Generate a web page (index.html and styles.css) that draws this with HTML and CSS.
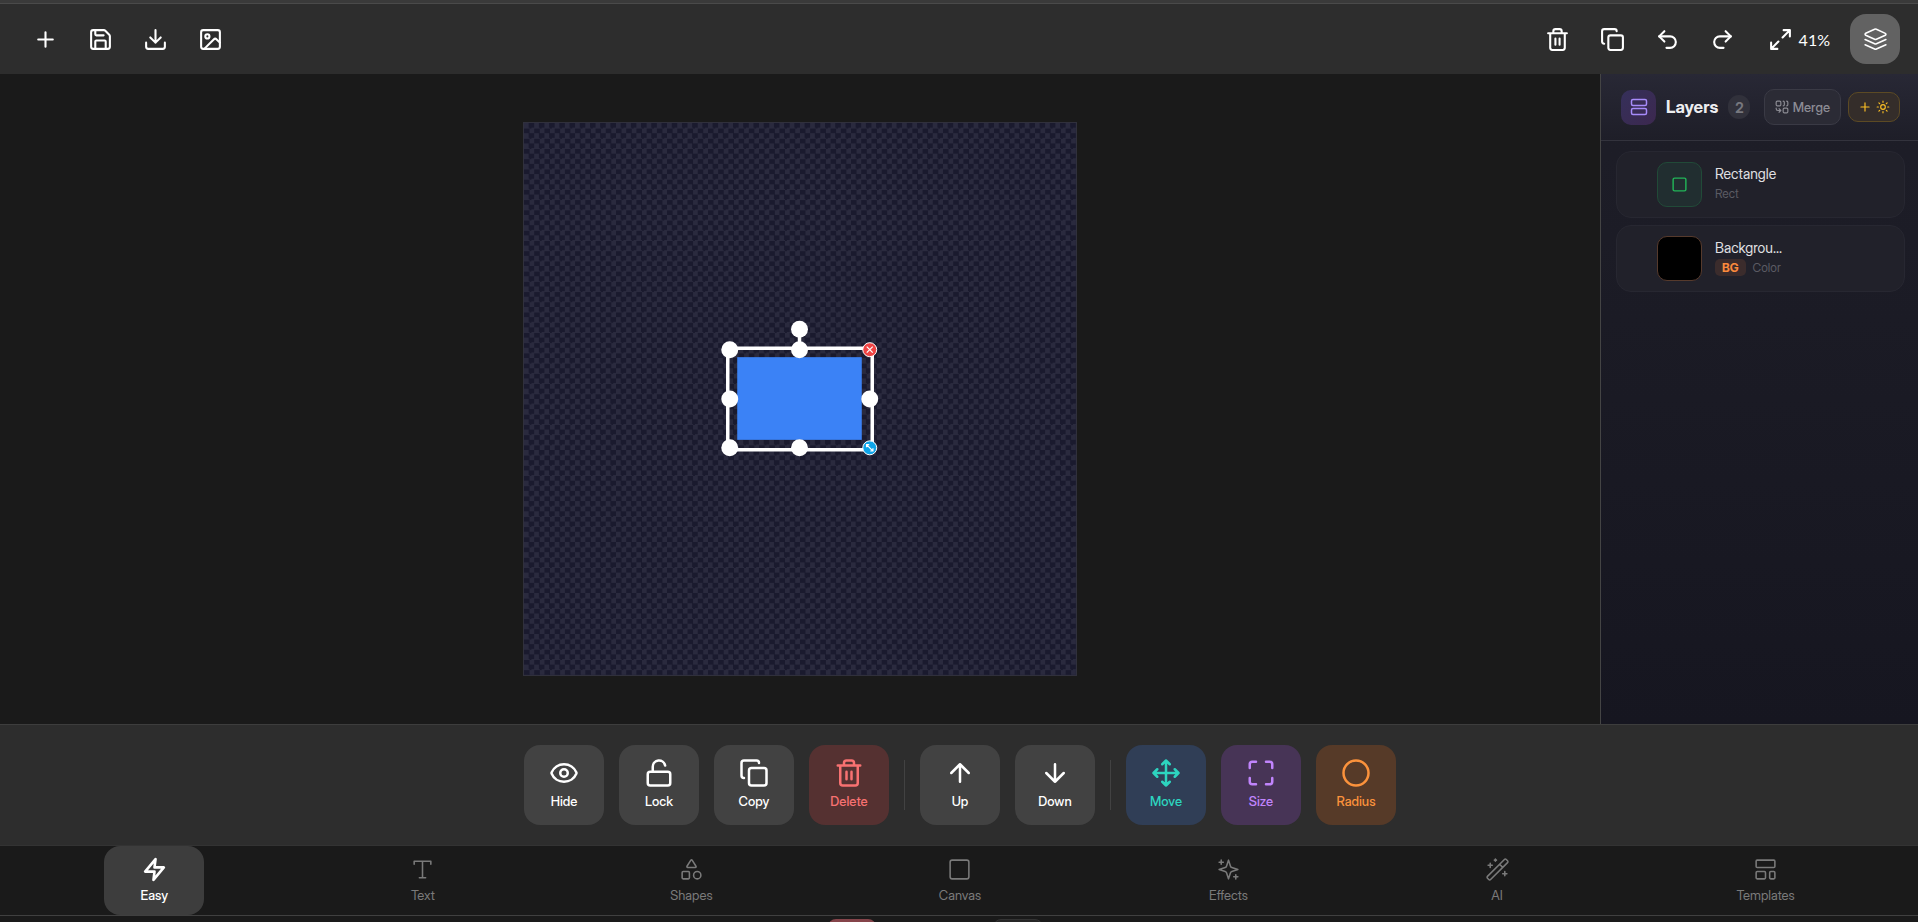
FILE: index.html
```html
<!DOCTYPE html>
<html lang="en">
<head>
<meta charset="utf-8">
<meta name="viewport" content="width=device-width, initial-scale=1">
<title>Image Editor</title>
<link rel="stylesheet" href="styles.css">
</head>
<body>
<div class="window-edge"></div>
<header class="topbar">
  <div class="tool-group">
    <button class="tool" aria-label="New"><svg class="icon" viewBox="0 0 24 24"><path d="M5 12h14M12 5v14"/></svg></button>
    <button class="tool" aria-label="Save"><svg class="icon" viewBox="0 0 24 24"><path d="M15.2 3a2 2 0 0 1 1.4.6l3.8 3.8a2 2 0 0 1 .6 1.4V19a2 2 0 0 1-2 2H5a2 2 0 0 1-2-2V5a2 2 0 0 1 2-2z"/><path d="M17 21v-7a1 1 0 0 0-1-1H8a1 1 0 0 0-1 1v7M7 3v4a1 1 0 0 0 1 1h7"/></svg></button>
    <button class="tool" aria-label="Download"><svg class="icon" viewBox="0 0 24 24"><path d="M21 15v4a2 2 0 0 1-2 2H5a2 2 0 0 1-2-2v-4M7 10l5 5 5-5M12 15V3"/></svg></button>
    <button class="tool" aria-label="Image"><svg class="icon" viewBox="0 0 24 24"><rect x="3" y="3" width="18" height="18" rx="2"/><circle cx="9" cy="9" r="2"/><path d="m21 15-3.086-3.086a2 2 0 0 0-2.828 0L6 21"/></svg></button>
  </div>
  <div class="tool-group">
    <button class="tool" aria-label="Delete"><svg class="icon" viewBox="0 0 24 24"><path d="M3 6h18M19 6v14a2 2 0 0 1-2 2H7a2 2 0 0 1-2-2V6M8 6V4a2 2 0 0 1 2-2h4a2 2 0 0 1 2 2v2M10 11v6M14 11v6"/></svg></button>
    <button class="tool" aria-label="Duplicate"><svg class="icon" viewBox="0 0 24 24"><rect x="8" y="8" width="14" height="14" rx="2"/><path d="M4 16c-1.1 0-2-.9-2-2V4c0-1.1.9-2 2-2h10c1.1 0 2 .9 2 2"/></svg></button>
    <button class="tool" aria-label="Undo"><svg class="icon" viewBox="0 0 24 24"><path d="M9 14 4 9l5-5"/><path d="M4 9h10.5a5.5 5.5 0 0 1 0 11H11"/></svg></button>
    <button class="tool" aria-label="Redo"><svg class="icon" viewBox="0 0 24 24"><path d="m15 14 5-5-5-5"/><path d="M20 9H9.500a5.500 5.500 0 0 0 0 11H13"/></svg></button>
    <button class="tool zoom"><svg class="icon" viewBox="0 0 24 24"><path d="M15 3h6v6M9 21H3v-6M21 3l-7 7M3 21l7-7"/></svg><span>41%</span></button>
    <button class="tool is-on" aria-label="Layers"><svg class="icon thin" viewBox="0 0 24 24"><path d="M12.830 2.180a2 2 0 0 0-1.660 0L2.600 6.080a1 1 0 0 0 0 1.830l8.580 3.910a2 2 0 0 0 1.660 0l8.580-3.900a1 1 0 0 0 0-1.830z"/><path d="m22 12-9.170 4.160a2 2 0 0 1-1.660 0L2 12M22 17l-9.170 4.160a2 2 0 0 1-1.660 0L2 17"/></svg></button>
  </div>
</header>

<main class="workspace">
  <section class="stage" aria-label="Canvas">
    <div class="artboard">
      <svg class="drawing" viewBox="0 0 554 554">
        <rect class="shape" x="214" y="235" width="125" height="83"/>
        <path class="frame" d="M204.500 226h145v102h-145zM276.500 207v19"/>
        <g class="handles">
          <circle cx="276.500" cy="207" r="8.500"/>
          <circle cx="206.500" cy="227.500" r="8.500"/><circle cx="276.500" cy="227.500" r="8.500"/>
          <circle cx="206.500" cy="277" r="8.500"/><circle cx="347" cy="277" r="8.500"/>
          <circle cx="206.500" cy="326" r="8.500"/><circle cx="276.500" cy="326" r="8.500"/>
        </g>
        <circle class="remove" cx="347" cy="227.500" r="7"/>
        <path class="mark" d="m344 224.500 6 6m0-6-6 6"/>
        <circle class="resize" cx="347" cy="326" r="7"/>
        <path class="mark" d="m344 323 6 6M343.800 325.500v-2.700h2.700M350.200 326.500v2.700h-2.700"/>
      </svg>
    </div>
  </section>

  <aside class="layers">
    <div class="layers-head">
      <span class="layers-logo"><svg class="icon small" viewBox="0 0 24 24"><rect x="2" y="2" width="20" height="8" rx="2"/><rect x="2" y="14" width="20" height="8" rx="2"/></svg></span>
      <h2>Layers</h2>
      <span class="count">2</span>
      <div class="head-actions">
        <button class="merge"><svg class="icon tiny" viewBox="0 0 24 24"><path d="M10 18H5a3 3 0 0 1-3-3v-1M14 2a2 2 0 0 1 2 2v4a2 2 0 0 1-2 2M20 2a2 2 0 0 1 2 2v4a2 2 0 0 1-2 2M7 21l3-3-3-3"/><rect x="14" y="14" width="8" height="8" rx="2"/><rect x="2" y="2" width="8" height="8" rx="2"/></svg>Merge</button>
        <button class="add-light" aria-label="Add light"><svg class="icon tiny" viewBox="0 0 24 24"><path d="M5 12h14M12 5v14"/></svg><svg class="icon tiny" viewBox="0 0 24 24"><circle cx="12" cy="12" r="4"/><path d="M12 2v2M12 20v2M4.930 4.930l1.410 1.410M17.660 17.660l1.410 1.410M2 12h2M20 12h2M6.340 17.660l-1.410 1.410M19.070 4.930l-1.410 1.410"/></svg></button>
      </div>
    </div>
    <ul class="layer-list">
      <li class="layer">
        <span class="thumb thumb-rect"><svg class="icon mini" viewBox="0 0 24 24"><rect x="3" y="3" width="18" height="18" rx="2"/></svg></span>
        <div class="layer-text">
          <div class="layer-name">Rectangle</div>
          <div class="layer-meta"><span>Rect</span></div>
        </div>
      </li>
      <li class="layer">
        <span class="thumb thumb-bg"></span>
        <div class="layer-text">
          <div class="layer-name">Backgrou...</div>
          <div class="layer-meta"><span class="tag">BG</span><span>Color</span></div>
        </div>
      </li>
    </ul>
  </aside>
</main>

<div class="actions" role="toolbar" aria-label="Object actions">
  <button class="action"><svg class="icon big" viewBox="0 0 24 24"><path d="M2.062 12.348a1 1 0 0 1 0-.696 10.750 10.750 0 0 1 19.876 0 1 1 0 0 1 0 .696 10.750 10.750 0 0 1-19.876 0"/><circle cx="12" cy="12" r="3"/></svg>Hide</button>
  <button class="action"><svg class="icon big" viewBox="0 0 24 24"><rect x="3" y="11" width="18" height="11" rx="2"/><path d="M7 11V7a5 5 0 0 1 9.900-1"/></svg>Lock</button>
  <button class="action"><svg class="icon big" viewBox="0 0 24 24"><rect x="8" y="8" width="14" height="14" rx="2"/><path d="M4 16c-1.100 0-2-.9-2-2V4c0-1.100.9-2 2-2h10c1.100 0 2 .9 2 2"/></svg>Copy</button>
  <button class="action red"><svg class="icon big" viewBox="0 0 24 24"><path d="M3 6h18M19 6v14a2 2 0 0 1-2 2H7a2 2 0 0 1-2-2V6M8 6V4a2 2 0 0 1 2-2h4a2 2 0 0 1 2 2v2M10 11v6M14 11v6"/></svg>Delete</button>
  <span class="divider"></span>
  <button class="action"><svg class="icon big" viewBox="0 0 24 24"><path d="m5 12 7-7 7 7M12 19V5"/></svg>Up</button>
  <button class="action"><svg class="icon big" viewBox="0 0 24 24"><path d="M12 5v14M19 12l-7 7-7-7"/></svg>Down</button>
  <span class="divider"></span>
  <button class="action teal"><svg class="icon big" viewBox="0 0 24 24"><path d="M12 2v20M15 19l-3 3-3-3M19 9l3 3-3 3M2 12h20M5 9l-3 3 3 3M9 5l3-3 3 3"/></svg>Move</button>
  <button class="action purple"><svg class="icon big" viewBox="0 0 24 24"><path d="M8 3H5a2 2 0 0 0-2 2v3M21 8V5a2 2 0 0 0-2-2h-3M3 16v3a2 2 0 0 0 2 2h3M16 21h3a2 2 0 0 0 2-2v-3"/></svg>Size</button>
  <button class="action orange"><svg class="icon big" viewBox="0 0 24 24"><circle cx="12" cy="12" r="10"/></svg>Radius</button>
</div>

<nav class="tabs">
  <button class="tab is-active"><svg class="icon" viewBox="0 0 24 24"><path d="M13 2 3 14h9l-1 8 10-12h-9z"/></svg>Easy</button>
  <button class="tab"><svg class="icon" viewBox="0 0 24 24"><path d="M4 7V4h16v3M9 20h6M12 4v16"/></svg>Text</button>
  <button class="tab"><svg class="icon" viewBox="0 0 24 24"><path d="M8.300 10a.7.7 0 0 1-.626-1.079L11.400 3a.7.7 0 0 1 1.198-.043L16.300 8.900a.7.7 0 0 1-.572 1.100z"/><rect x="3" y="14" width="7" height="7" rx="1"/><circle cx="17.500" cy="17.500" r="3.500"/></svg>Shapes</button>
  <button class="tab"><svg class="icon" viewBox="0 0 24 24"><rect x="3" y="3" width="18" height="18" rx="2"/></svg>Canvas</button>
  <button class="tab"><svg class="icon" viewBox="0 0 24 24"><path d="m12 3-1.912 5.813a2 2 0 0 1-1.275 1.275L3 12l5.813 1.912a2 2 0 0 1 1.275 1.275L12 21l1.912-5.813a2 2 0 0 1 1.275-1.275L21 12l-5.813-1.912a2 2 0 0 1-1.275-1.275zM5 3v4M19 17v4M3 5h4M17 19h4"/></svg>Effects</button>
  <button class="tab"><svg class="icon" viewBox="0 0 24 24"><path d="m21.640 3.640-1.280-1.280a1.210 1.210 0 0 0-1.720 0L2.360 18.640a1.210 1.210 0 0 0 0 1.720l1.280 1.280a1.200 1.200 0 0 0 1.720 0L21.640 5.360a1.200 1.200 0 0 0 0-1.720M14 7l3 3M5 6v4M19 14v4M10 2v2M7 8H3M21 16h-4M11 3H9"/></svg>AI</button>
  <button class="tab"><svg class="icon" viewBox="0 0 24 24"><rect x="3" y="3" width="18" height="7" rx="1"/><rect x="3" y="14" width="9" height="7" rx="1"/><rect x="16" y="14" width="5" height="7" rx="1"/></svg>Templates</button>
</nav>

<footer class="tray"><span class="tray-red"></span><span class="tray-grey"></span></footer>
</body>
</html>
```
FILE: styles.css
```css
* { box-sizing: border-box; }

body {
  margin: 0;
  height: 100vh;
  overflow: hidden;
  display: flex;
  flex-direction: column;
  background: #1a1a1a;
  color: #fff;
  font-family: "Inter Display", Inter, "Liberation Sans", sans-serif;
  font-variation-settings: "opsz" 32;
}

button {
  margin: 0;
  padding: 0;
  border: 0;
  background: none;
  color: inherit;
  font: inherit;
  font-variation-settings: inherit;
  cursor: pointer;
}

.icon {
  display: block;
  flex: none;
  width: 25px;
  height: 25px;
  fill: none;
  stroke: currentColor;
  stroke-width: 2;
  stroke-linecap: round;
  stroke-linejoin: round;
}
.icon.thin { stroke-width: 1.5; }
.icon.big { width: 30px; height: 30px; }
.icon.small { width: 18px; height: 18px; }
.icon.mini { width: 17px; height: 17px; }
.icon.tiny { width: 14px; height: 14px; }

/* Top bar */
.window-edge {
  flex: none;
  height: 4px;
  background: #3a3a3a;
  border-bottom: 1px solid #4a4a4a;
}
.topbar {
  flex: none;
  height: 70px;
  padding: 0 18px 0 20px;
  display: flex;
  align-items: center;
  justify-content: space-between;
  background: #2d2d2d;
}
.tool-group { display: flex; gap: 5px; }
.tool {
  width: 50px;
  height: 50px;
  border-radius: 16px;
  display: flex;
  align-items: center;
  justify-content: center;
}
.tool.zoom {
  width: auto;
  padding: 0 15px;
  gap: 6px;
  font: 16px Lato, "Noto Sans", sans-serif;
}
.tool.is-on { background: #626262; }

/* Work area */
.workspace {
  flex: 1;
  min-height: 0;
  display: flex;
}
.stage {
  flex: 1;
  padding: 48px;
  display: flex;
  justify-content: center;
}
.artboard {
  height: 100%;
  aspect-ratio: 1;
  border: 1px solid #30303c;
  background: repeating-conic-gradient(#1a1a2e 0 25%, #2a2a3e 0 50%) 0 0 / calc(100% / 54) calc(100% / 54);
}
.drawing { display: block; width: 100%; height: 100%; }
.shape { fill: #3b82f6; }
.frame { fill: none; stroke: #fff; stroke-width: 3.5; }
.handles { fill: #fff; }
.remove { fill: #ef4444; stroke: #fff; stroke-width: 1; }
.resize { fill: #0ea5e9; stroke: #fff; stroke-width: 1; }
.mark { fill: none; stroke: #fff; stroke-width: 1.2; }

/* Layers panel */
.layers {
  flex: none;
  width: 318px;
  border-left: 1px solid #444;
  background: linear-gradient(#1e1e28, #161620);
}
.layers-head {
  height: 67px;
  padding: 0 18px 0 20px;
  display: flex;
  align-items: center;
  gap: 10px;
  border-bottom: 1px solid #33333d;
  background: linear-gradient(#282835, #1e1e28);
}
.layers-logo {
  width: 35px;
  height: 35px;
  border-radius: 10px;
  display: grid;
  place-items: center;
  background: linear-gradient(135deg, #35305a, #3c284f);
  color: #a78bfa;
}
.layers h2 {
  margin: 0;
  font-size: 17px;
  font-weight: 700;
  color: #ededf0;
}
.count {
  min-width: 22px;
  height: 24px;
  border-radius: 12px;
  display: grid;
  place-items: center;
  background: #31313b;
  color: #77777e;
  font-size: 14px;
  font-weight: 700;
}
.head-actions {
  margin-left: auto;
  display: flex;
  align-items: center;
  gap: 7px;
}
.merge, .add-light {
  display: flex;
  align-items: center;
  justify-content: center;
  border: 1px solid #3a3a45;
  border-radius: 10px;
}
.merge {
  height: 36px;
  padding: 0 10px;
  gap: 4px;
  background: #2b2b35;
  color: #8c8c94;
  font-size: 13px;
  font-weight: 500;
}
.add-light {
  width: 52px;
  height: 30px;
  gap: 4px;
  border-color: #5c4a24;
  background: #342d2a;
  color: #fbbf24;
}
.layer-list {
  margin: 0;
  padding: 10px 13px 10px 15px;
  display: grid;
  gap: 7px;
  list-style: none;
}
.layer {
  min-height: 67px;
  padding: 10px 10px 10px 40px;
  display: flex;
  align-items: center;
  gap: 13px;
  border: 1px solid #272731;
  border-radius: 15px;
  background: #21212a;
}
.thumb {
  flex: none;
  width: 45px;
  height: 45px;
  border: 1px solid;
  border-radius: 10px;
  display: grid;
  place-items: center;
}
.thumb-rect { border-color: #214a38; background: #212e30; color: #22b558; }
.thumb-bg { border-color: #563a2c; background: #000; }
.layer-text { padding-bottom: 2px; }
.layer-name {
  white-space: nowrap;
  font-size: 14px;
  line-height: 20px;
  color: #e0e0e3;
}
.layer-meta {
  display: flex;
  align-items: center;
  gap: 7px;
  min-height: 20px;
  font-size: 12px;
  line-height: 17px;
  color: #5b5b63;
}
.tag {
  padding: 0 7px;
  border-radius: 5px;
  background: #3b2c2c;
  color: #fb8a3c;
  font-size: 12px;
  font-weight: 700;
}

/* Object actions */
.actions {
  flex: none;
  height: 121px;
  padding-left: 2px;
  display: flex;
  align-items: center;
  justify-content: center;
  gap: 15px;
  border-top: 1px solid #3d3d3d;
  background: #2d2d2d;
}
.action {
  width: 80px;
  height: 80px;
  padding-bottom: 3px;
  border-radius: 16px;
  display: flex;
  flex-direction: column;
  align-items: center;
  justify-content: center;
  gap: 5px;
  background: #424242;
  font-size: 13px;
  line-height: 16px;
  font-weight: 500;
}
.action.red { background: #553131; color: #f87171; }
.action.teal { background: #303e56; color: #2dd4bf; }
.action.purple { background: #473456; color: #c084fc; }
.action.orange { background: #563a28; color: #fb923c; }
.divider { width: 1px; height: 50px; background: #424242; }

/* Bottom tabs */
.tabs {
  flex: none;
  height: 71px;
  padding: 0 18px 0 20px;
  display: flex;
  justify-content: space-around;
  border-top: 1px solid #333;
  border-bottom: 1px solid #404040;
  background: #1a1a1a;
}
.tab {
  width: 100px;
  padding-bottom: 1px;
  border-radius: 16px;
  display: flex;
  flex-direction: column;
  align-items: center;
  justify-content: center;
  gap: 5px;
  color: #7a7a7a;
  font-size: 13px;
  line-height: 16px;
}
.tab .icon { stroke-width: 1.5; }
.tab.is-active { background: #3d3d3d; color: #fff; font-weight: 500; }
.tab.is-active .icon { stroke-width: 2.5; }

.tray {
  flex: none;
  height: 6px;
  padding: 3px 48px 0 0;
  display: flex;
  justify-content: center;
  gap: 117px;
  overflow: hidden;
}
.tray span { flex: none; height: 30px; border-radius: 8px; }
.tray-red { width: 48px; background: #85444a; }
.tray-grey { width: 50px; background: #262626; border: 1px solid #333; }
```
